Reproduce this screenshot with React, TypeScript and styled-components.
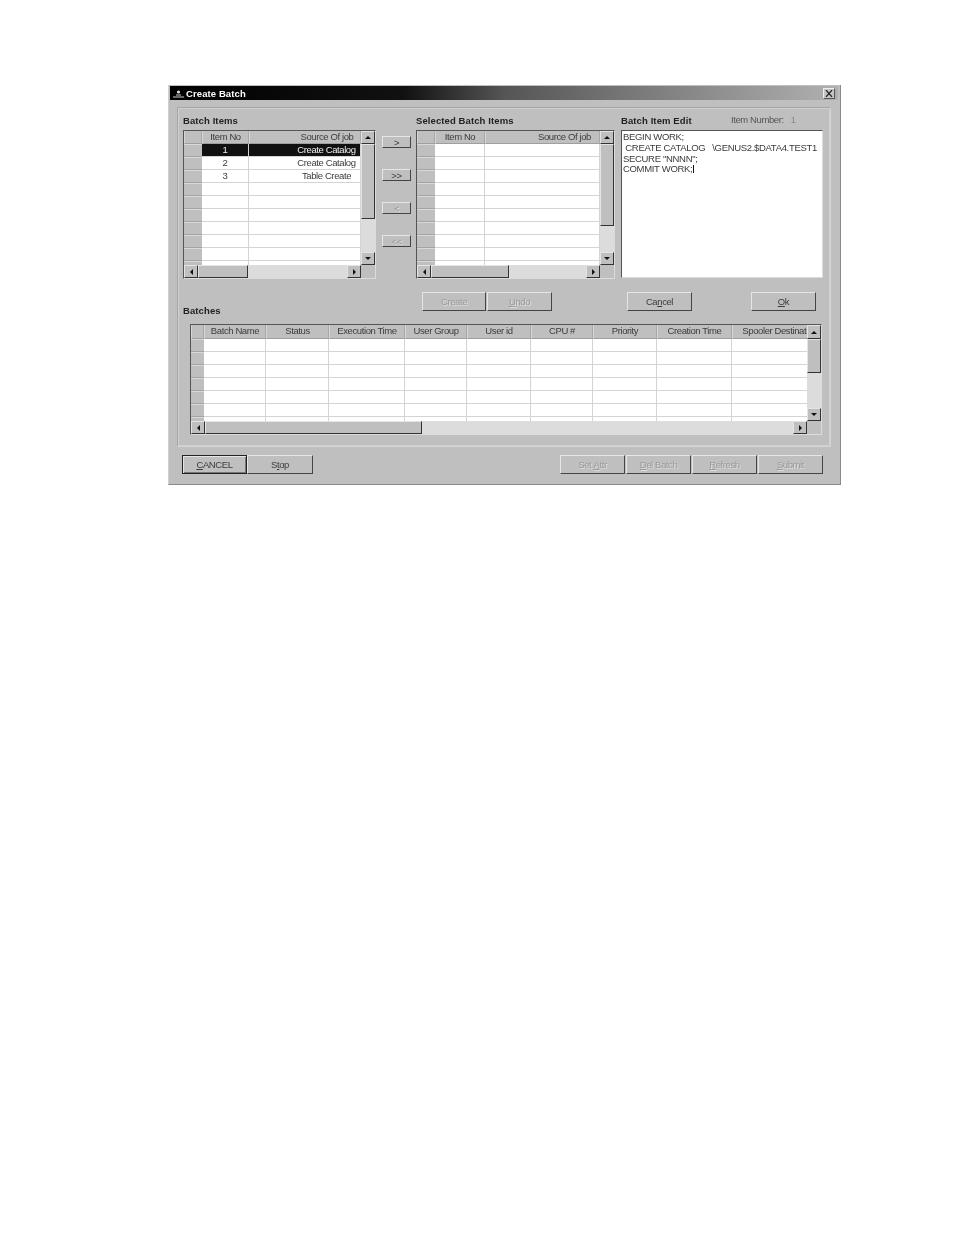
import React from "react";
import styled, { createGlobalStyle } from "styled-components";

const Global = createGlobalStyle`
  html, body { margin: 0; padding: 0; background: #fff; }
  body { font-family: "Liberation Sans", Arial, sans-serif; }
`;

const Page = styled.div`
  padding: 85px 0 0 168px;
  width: 954px;
  height: 1235px;
  box-sizing: border-box;
`;

const Win = styled.div`
  width: 673px;
  height: 400px;
  box-sizing: border-box;
  background: #bfbfbf;
  padding: 1px 2px 0 1px;
  border-right: 1px solid #8a8a8a;
  border-bottom: 1px solid #8a8a8a;
  border-left: 1px solid #d0d0d0;
  filter: blur(0.7px);
  display: flex;
  flex-direction: column;
  color: #3c3c3c;
  font-size: 9.5px;
  letter-spacing: -0.4px;
`;

const TitleBar = styled.div`
  height: 14px;
  flex: none;
  background: linear-gradient(90deg, #000 0%, #111 35%, #555 50%, #b0b0b0 100%);
  display: flex;
  align-items: center;
  padding: 0 3px 0 2px;
  gap: 1px;
  color: #fff;
  font-weight: bold;
  font-size: 9.5px;
  letter-spacing: 0.1px;
`;

const TitleText = styled.span`
  flex: 1;
`;

const CloseBox = styled.div`
  width: 12px;
  height: 11px;
  background: #c4c4c4;
  border: 1px solid;
  border-color: #eee #555 #555 #eee;
  box-sizing: border-box;
  display: flex;
  align-items: center;
  justify-content: center;
`;

const Panel = styled.div`
  margin: 7px 7px 0 7px;
  height: 340px;
  box-sizing: border-box;
  border: 1px solid #a6a6a6;
  border-right-color: #d6d6d6;
  border-bottom-color: #d6d6d6;
  box-shadow: 0 0 0 1px #cfcfcf inset;
  padding: 6px 0 0 5px;
  display: flex;
  flex-direction: column;
`;

const TopRow = styled.div`
  display: flex;
  align-items: flex-start;
`;

const Col = styled.div<{ $w: number; $after?: number }>`
  width: ${(p) => p.$w}px;
  margin-right: ${(p) => p.$after ?? 0}px;
  flex: none;
  display: flex;
  flex-direction: column;
`;

const Heading = styled.div`
  height: 16px;
  line-height: 14px;
  font-weight: bold;
  color: #222;
  font-size: 9.5px;
  letter-spacing: 0.1px;
  white-space: nowrap;
`;

const EditHead = styled.div`
  display: flex;
  height: 16px;
  line-height: 12px;
`;

const EditTitle = styled(Heading)`
  width: 110px;
  flex: none;
`;

const ItemNum = styled.span`
  color: #555;
`;

const ItemValue = styled.span`
  color: #888;
  margin-left: 7px;
`;

const Arrows = styled.div`
  width: 40px;
  flex: none;
  padding: 22px 0 0 6px;
  box-sizing: border-box;
  display: flex;
  flex-direction: column;
  gap: 21px;
`;

const Btn = styled.div<{ $w: number; $h: number; $off?: boolean }>`
  width: ${(p) => p.$w}px;
  height: ${(p) => p.$h}px;
  box-sizing: border-box;
  flex: none;
  background: #bfbfbf;
  border: 1px solid;
  border-color: #e6e6e6 #444 #444 #e6e6e6;
  display: flex;
  align-items: center;
  justify-content: center;
  white-space: pre;
  color: ${(p) => (p.$off ? "#9a9a9a" : "#3c3c3c")};
  text-shadow: ${(p) => (p.$off ? "1px 1px 0 #dedede" : "none")};
`;

const DefaultBtn = styled(Btn)`
  border-color: #222;
  box-shadow: inset 1px 1px 0 #e6e6e6, inset -1px -1px 0 #777;
`;

const Sunken = styled.div<{ $w: number; $h: number }>`
  width: ${(p) => p.$w}px;
  height: ${(p) => p.$h}px;
  box-sizing: border-box;
  border: 1px solid;
  border-color: #555 #dcdcdc #dcdcdc #555;
  flex: none;
  background: #bfbfbf;
  display: grid;
  grid-template-columns: minmax(0, 1fr) 14px;
  grid-template-rows: minmax(0, 1fr) 13px;
`;

const ViewPort = styled.div`
  grid-column: 1;
  grid-row: 1;
  overflow: hidden;
  background: #fff;
  display: flex;
  flex-direction: column;
`;

const Row = styled.div<{ $h: number; $cols: string }>`
  height: ${(p) => p.$h}px;
  flex: none;
  display: grid;
  grid-template-columns: ${(p) => p.$cols};
`;

const HeadCell = styled.div<{ $pad: number }>`
  background: #bfbfbf;
  border-right: 1px solid #a8a8a8;
  border-left: 1px solid #d6d6d6;
  border-bottom: 1px solid #9f9f9f;
  box-sizing: border-box;
  text-align: center;
  white-space: nowrap;
  overflow: hidden;
  line-height: 12px;
  padding-left: ${(p) => p.$pad}px;
`;

const RowHead = styled.div`
  background: #bfbfbf;
  border-top: 1px solid #d8d8d8;
  border-bottom: 1px solid #a4a4a4;
  box-sizing: border-box;
`;

const Cell = styled.div<{ $sel?: boolean; $pad: number }>`
  background: ${(p) => (p.$sel ? "#111" : "#fff")};
  color: ${(p) => (p.$sel ? "#eee" : "#3c3c3c")};
  border-right: 1px solid #d4d4d4;
  border-bottom: 1px solid #d4d4d4;
  box-sizing: border-box;
  text-align: center;
  line-height: 12px;
  white-space: nowrap;
  padding-left: ${(p) => p.$pad}px;
`;

const VBar = styled.div`
  grid-column: 2;
  grid-row: 1;
  background: #dcdcdc;
  display: flex;
  flex-direction: column;
  min-height: 0;
`;

const HBar = styled.div`
  grid-column: 1;
  grid-row: 2;
  background: #dcdcdc;
  display: flex;
  min-width: 0;
`;

const Corner = styled.div`
  grid-column: 2;
  grid-row: 2;
  background: #bfbfbf;
`;

const Raised = styled.div`
  background: #bfbfbf;
  border: 1px solid;
  border-color: #e4e4e4 #333 #333 #e4e4e4;
  box-sizing: border-box;
  flex: none;
`;

const ArrowBtn = styled(Raised)<{ $w: number; $h: number }>`
  width: ${(p) => p.$w}px;
  height: ${(p) => p.$h}px;
  display: flex;
  align-items: center;
  justify-content: center;
`;

const VThumb = styled(Raised)<{ $h: number }>`
  height: ${(p) => p.$h}px;
`;

const HThumb = styled(Raised)<{ $w: number }>`
  width: ${(p) => p.$w}px;
`;

const Spacer = styled.div`
  flex: 1;
`;

const Tri = ({ d }: { d: "u" | "d" | "l" | "r" }) => {
  const pts = { u: "0,4 3,1 6,4", d: "0,1 6,1 3,4", l: "4,0 1,3 4,6", r: "1,0 4,3 1,6" }[d];
  const w = d === "u" || d === "d" ? 6 : 5;
  const h = d === "u" || d === "d" ? 5 : 6;
  return (
    <svg width={w} height={h} viewBox={`0 0 ${w} ${h}`}>
      <polygon points={pts} fill="#111" />
    </svg>
  );
};

type GridProps = {
  w: number;
  h: number;
  cols: number[];
  head: string[];
  rows?: string[][];
  rowCount: number;
  headH: number;
  vThumb: number;
  hThumb: number;
  sourcePad?: number;
};

const DataGrid = ({ w, h, cols, head, rows = [], rowCount, headH, vThumb, hThumb, sourcePad = 0 }: GridProps) => {
  const tmpl = cols.map((c) => `${c}px`).join(" ");
  const last = cols.length - 1;
  return (
    <Sunken $w={w} $h={h}>
      <ViewPort>
        <Row $h={headH} $cols={tmpl}>
          {head.map((t, i) => (
            <HeadCell key={i} $pad={i === last ? sourcePad : 0}>{t}</HeadCell>
          ))}
        </Row>
        {Array.from({ length: rowCount }).map((_, r) => (
          <Row key={r} $h={13} $cols={tmpl}>
            <RowHead />
            {cols.slice(1).map((_, c) => (
              <Cell key={c} $sel={r === 0 && rows.length > 0} $pad={c === last - 1 ? sourcePad : 0}>
                {rows[r]?.[c] ?? ""}
              </Cell>
            ))}
          </Row>
        ))}
      </ViewPort>
      <VBar>
        <ArrowBtn $w={14} $h={headH}><Tri d="u" /></ArrowBtn>
        <VThumb $h={vThumb} />
        <Spacer />
        <ArrowBtn $w={14} $h={13}><Tri d="d" /></ArrowBtn>
      </VBar>
      <HBar>
        <ArrowBtn $w={14} $h={13}><Tri d="l" /></ArrowBtn>
        <HThumb $w={hThumb} />
        <Spacer />
        <ArrowBtn $w={14} $h={13}><Tri d="r" /></ArrowBtn>
      </HBar>
      <Corner />
    </Sunken>
  );
};

const EditBox = styled.div`
  width: 202px;
  height: 148px;
  box-sizing: border-box;
  background: #fff;
  border: 1px solid;
  border-color: #555 #dcdcdc #dcdcdc #555;
  padding: 1px 0 0 1px;
  line-height: 10.8px;
  font-size: 9.5px;
  letter-spacing: -0.32px;
  white-space: pre;
  overflow: hidden;
  color: #3a3a3a;
`;

const Caret = styled.span`
  display: inline-block;
  width: 1px;
  height: 8px;
  margin-left: 1px;
  background: #111;
  vertical-align: -1px;
`;

const ActionRow = styled.div`
  display: flex;
  align-items: flex-start;
  height: 26px;
  margin-top: 13px;
`;

const BatchesHeading = styled(Heading)`
  width: 239px;
  flex: none;
  align-self: flex-end;
  height: 14px;
  line-height: 14px;
`;

const ActionGap = styled.div<{ $w: number }>`
  width: ${(p) => p.$w}px;
  flex: none;
`;

const BatchesWrap = styled.div`
  margin-top: 6px;
  padding-left: 7px;
`;

const Footer = styled.div`
  display: flex;
  padding: 8px 0 0 12px;
`;

const FooterRight = styled.div`
  display: flex;
  margin-left: 247px;
  gap: 1px;
`;

const itemRows = [
  ["1", "Create Catalog"],
  ["2", "Create Catalog"],
  ["3", "Table Create"],
];

export default function App() {
  return (
    <Page>
      <Global />
      <Win>
        <TitleBar>
          <svg width="13" height="9" viewBox="0 0 13 9">
            <circle cx="6.5" cy="3" r="1.6" fill="#ddd" />
            <path d="M1 8h11M4 6h5" stroke="#ccc" strokeWidth="1" />
          </svg>
          <TitleText>Create Batch</TitleText>
          <CloseBox>
            <svg width="8" height="7" viewBox="0 0 8 7">
              <path d="M1 0l6 7M7 0L1 7" stroke="#222" strokeWidth="1.2" />
            </svg>
          </CloseBox>
        </TitleBar>
        <Panel>
          <TopRow>
            <Col $w={193}>
              <Heading>Batch Items</Heading>
              <DataGrid
                w={193}
                h={149}
                cols={[18, 47, 112]}
                head={["", "Item No", "Source Of job"]}
                rows={itemRows}
                rowCount={10}
                headH={13}
                vThumb={75}
                hThumb={50}
                sourcePad={44}
              />
            </Col>
            <Arrows>
              <Btn $w={29} $h={12}>&gt;</Btn>
              <Btn $w={29} $h={12}>&gt;&gt;</Btn>
              <Btn $w={29} $h={12} $off>&lt;</Btn>
              <Btn $w={29} $h={12} $off>&lt;&lt;</Btn>
            </Arrows>
            <Col $w={199} $after={6}>
              <Heading>Selected Batch Items</Heading>
              <DataGrid
                w={199}
                h={149}
                cols={[18, 50, 115]}
                head={["", "Item No", "Source Of job"]}
                rowCount={10}
                headH={13}
                vThumb={82}
                hThumb={78}
                sourcePad={44}
              />
            </Col>
            <Col $w={202}>
              <EditHead>
                <EditTitle>Batch Item Edit</EditTitle>
                <ItemNum>Item Number:</ItemNum>
                <ItemValue>1</ItemValue>
              </EditHead>
              <EditBox>
                {"BEGIN WORK;\n CREATE CATALOG   \\GENUS2.$DATA4.TEST1\nSECURE \"NNNN\";\nCOMMIT WORK;"}
                <Caret />
              </EditBox>
            </Col>
          </TopRow>
          <ActionRow>
            <BatchesHeading>Batches</BatchesHeading>
            <Btn $w={64} $h={19} $off>Create</Btn>
            <ActionGap $w={1} />
            <Btn $w={65} $h={19} $off><u>U</u>ndo</Btn>
            <ActionGap $w={75} />
            <Btn $w={65} $h={19}>Ca<u>n</u>cel</Btn>
            <ActionGap $w={59} />
            <Btn $w={65} $h={19}><u>O</u>k</Btn>
          </ActionRow>
          <BatchesWrap>
            <DataGrid
              w={632}
              h={111}
              cols={[13, 62, 63, 76, 62, 64, 62, 64, 75, 96]}
              head={["", "Batch Name", "Status", "Execution Time", "User Group", "User id", "CPU #", "Priority", "Creation Time", "Spooler Destination"]}
              rowCount={7}
              headH={14}
              vThumb={34}
              hThumb={217}
            />
          </BatchesWrap>
        </Panel>
        <Footer>
          <DefaultBtn $w={65} $h={19}><u>C</u>ANCEL</DefaultBtn>
          <Btn $w={66} $h={19}>S<u>t</u>op</Btn>
          <FooterRight>
            <Btn $w={65} $h={19} $off>Set <u>A</u>ttr</Btn>
            <Btn $w={65} $h={19} $off><u>D</u>el Batch</Btn>
            <Btn $w={65} $h={19} $off><u>R</u>efresh</Btn>
            <Btn $w={65} $h={19} $off><u>S</u>ubmit</Btn>
          </FooterRight>
        </Footer>
      </Win>
    </Page>
  );
}
